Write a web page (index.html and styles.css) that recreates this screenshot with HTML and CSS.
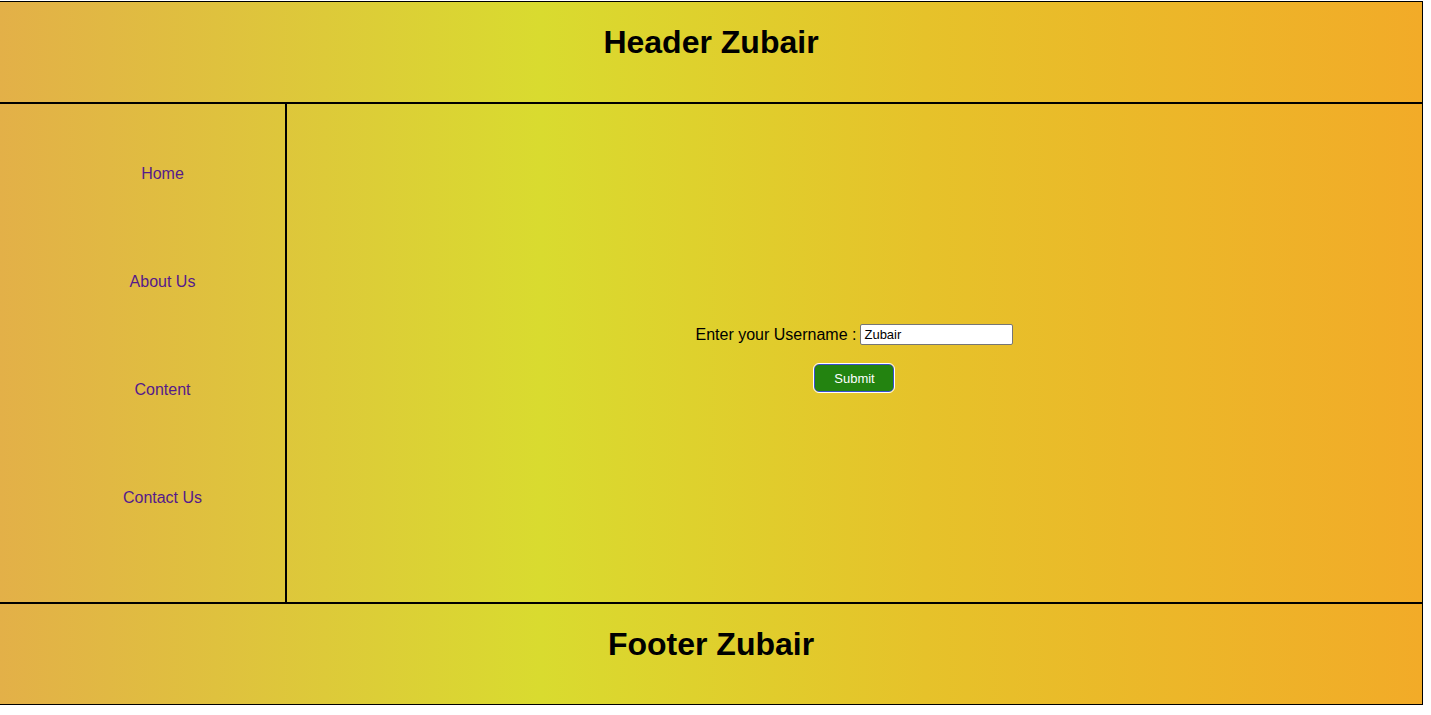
FILE: index.html
```html
<!DOCTYPE html>
<html>
<head>
<meta charset="utf-8">
<link rel="stylesheet" href="styles.css">
</head>
<body>
<div class="page">
  <header class="header"><h1>Header Zubair</h1></header>
  <nav class="nav">
    <ul>
      <li><a href="#">Home</a></li>
      <li><a href="#">About Us</a></li>
      <li><a href="#">Content</a></li>
      <li><a href="#">Contact Us</a></li>
    </ul>
  </nav>
  <main class="main">
    <form class="form">
      <div class="row">
        <label for="u">Enter your Username :</label>
        <input id="u" type="text" value="Zubair">
      </div>
      <button type="button" class="btn">Submit</button>
    </form>
  </main>
  <footer class="footer"><h1>Footer Zubair</h1></footer>
</div>
</body>
</html>
```
FILE: styles.css
```css
html, body {
  margin: 0;
  padding: 0;
  background: #ffffff;
}
body {
  font-family: "Liberation Sans", Arial, sans-serif;
  font-size: 16px;
}
.page {
  margin-top: 1px;
  width: 1423px;
  height: 704px;
  display: grid;
  grid-template-columns: 286px 1137px;
  grid-template-rows: 102px 500px 102px;
  background: linear-gradient(to right, #e3b048 0%, #d9db2f 38%, #e6c22a 65%, #f2ab28 100%);
}
.header, .footer {
  grid-column: 1 / 3;
  border: 1px solid #000;
  border-left: none;
  text-align: center;
  box-sizing: border-box;
}
.header h1, .footer h1 {
  font-size: 32px;
  font-weight: bold;
  margin: 22px 0 20px;
  line-height: 37px;
}
.nav {
  border-top: 1px solid #000;
  border-bottom: 1px solid #000;
  border-right: 1px solid #000;
  box-sizing: border-box;
}
.nav ul {
  list-style: none;
  margin: 16px 0;
  padding-left: 40px;
  text-align: center;
}
.nav li {
  padding: 45px 0;
  line-height: 18px;
}
.nav a {
  color: #551a8b;
  text-decoration: none;
}
.main {
  border: 1px solid #000;
  box-sizing: border-box;
  display: flex;
  align-items: center;
  justify-content: center;
}
.form {
  display: flex;
  flex-direction: column;
  align-items: center;
  gap: 19px;
  margin-top: 10px;
}
.row {
  display: flex;
  align-items: center;
  gap: 4px;
}
.row label {
  line-height: 18px;
}
.row input {
  width: 153px;
  height: 21px;
  box-sizing: border-box;
  border: 1px solid #767676;
  border-radius: 2px;
  padding: 1px 3px;
  font-family: "Liberation Sans", Arial, sans-serif;
  font-size: 13px;
  background: #fff;
  color: #000;
}
.btn {
  width: 80px;
  height: 28px;
  box-sizing: border-box;
  background: #238310;
  color: #fff;
  border: 1px solid #3a4fd0;
  outline: 1px solid #fff;
  outline-offset: 0;
  border-radius: 5px;
  font-family: "Liberation Sans", Arial, sans-serif;
  font-size: 13px;
  padding: 0;
}
```
